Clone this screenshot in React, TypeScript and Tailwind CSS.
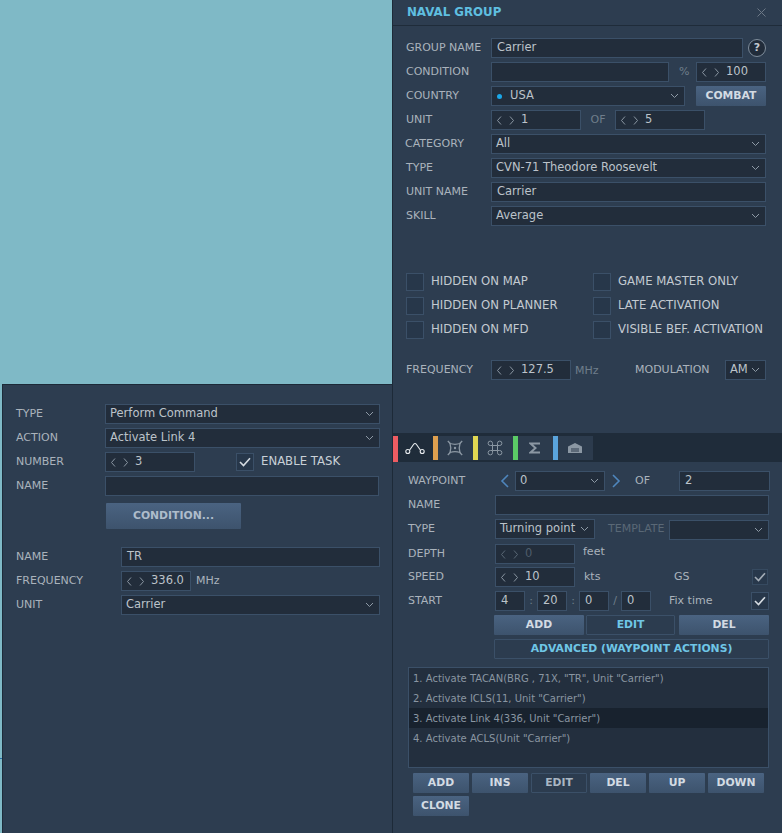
import { ReactNode } from "react";

const field = "h-5 shrink-0 flex items-center bg-[#222d3b] border border-[#3b5068] text-[11.5px] text-[#bcc3ca]";
const label = "shrink-0 text-[11px] text-[#aab3bc]";

function Chevron({ className = "" }: { className?: string }) {
  return (
    <svg width="9" height="6" viewBox="0 0 9 6" fill="none" stroke="#8e9aa6" strokeWidth="1" className={className}>
      <path d="M1 1l3.5 3.5L8 1" />
    </svg>
  );
}

function Input({ w, value = "", className = "" }: { w: string; value?: string; className?: string }) {
  return <div className={`${field} ${w} pl-[5px] ${className}`}>{value}</div>;
}

function Select({ w, value = "", dot = false, className = "" }: { w: string; value?: string; dot?: boolean; className?: string }) {
  return (
    <div className={`${field} ${w} pl-[4px] pr-[5px] justify-between ${className}`}>
      <span className="flex items-center whitespace-nowrap">
        {dot && <span className="ml-[1px] mr-[8px] w-[5px] h-[5px] rounded-full bg-[#1aa7e8]" />}
        {value}
      </span>
      <Chevron />
    </div>
  );
}

function Spinner({ w, value, dim = false }: { w: string; value: string; dim?: boolean }) {
  return (
    <div className={`${field} ${w} pl-[5px]`}>
      <svg width="17" height="9" viewBox="0 0 17 9" fill="none" stroke={dim ? "#5a6876" : "#8a96a2"} strokeWidth="1">
        <path d="M4 0.5L0.5 4.5L4 8.5M13 0.5L16.500 4.500L13 8.500" />
      </svg>
      <span className={`ml-[7px] ${dim ? "text-[#4e5c6a]" : ""}`}>{value}</span>
    </div>
  );
}

function Button({ w, text, flat = false, blue = false, className = "" }: { w: string; text: string; flat?: boolean; blue?: boolean; className?: string }) {
  const skin = flat
    ? "border border-[#3b5068] bg-[#2c3c4f]"
    : "bg-gradient-to-b from-[#4a6381] to-[#3d536d]";
  const color = blue ? "text-[#6fc6e6]" : flat ? "text-[#a9b6c3]" : "text-[#d3dbe3]";
  return (
    <div className={`h-5 shrink-0 flex items-center justify-center rounded-[1px] text-[10.800px] font-bold ${skin} ${color} ${w} ${className}`}>
      {text}
    </div>
  );
}

function Check({ on = false, className = "" }: { on?: boolean; className?: string }) {
  return (
    <div className={`w-[18px] h-[18px] shrink-0 flex items-center justify-center bg-[#27374a] border border-[#3b5068] ${className}`}>
      {on && (
        <svg width="12" height="10" viewBox="0 0 12 10" fill="none" stroke="#d5dbe1" strokeWidth="1.6">
          <path d="M1 5l3.5 3.5L11 1.2" />
        </svg>
      )}
    </div>
  );
}

function Row({ children, className = "" }: { children: ReactNode; className?: string }) {
  return <div className={`h-5 flex items-center ${className}`}>{children}</div>;
}

function CheckLabel({ text, w }: { text: string; w: string }) {
  return (
    <div className={`${w} flex items-center gap-[7px] text-[11.700px] text-[#c3cad1] whitespace-nowrap`}>
      <Check />
      {text}
    </div>
  );
}

function TabIcon({ color, children, active = false }: { color: string; children: ReactNode; active?: boolean }) {
  return (
    <div className={`h-[24px] w-10 flex ${active ? "" : "bg-[#2c3b4d]"}`}>
      <div className={`w-[5px] shrink-0 ${color} ${active ? "h-[26px]" : "h-[24px]"}`} />
      <div className="flex-1 flex items-center justify-center pr-[1px]">{children}</div>
    </div>
  );
}

export default function App() {
  return (
    <div className="w-[782px] h-[833px] flex overflow-hidden relative bg-[#2d3d50] font-['DejaVu_Sans',sans-serif]">
      {/* left column: map and the task panel */}
      <div className="w-[392px] shrink-0 flex flex-col bg-[#7fb9c6] pl-[2px]">
        <div className="h-[384px] shrink-0" />
        <div className="flex-1 bg-[#2d3d50] border-t border-l border-[#1d2a38] pl-[13px] pt-[19px]">
          <div className="flex flex-col gap-1">
            <Row>
              <span className={`${label} w-[89px]`}>TYPE</span>
              <Select w="w-[275px]" value="Perform Command" />
            </Row>
            <Row>
              <span className={`${label} w-[89px]`}>ACTION</span>
              <Select w="w-[275px]" value="Activate Link 4" />
            </Row>
            <Row>
              <span className={`${label} w-[89px]`}>NUMBER</span>
              <Spinner w="w-[90px]" value="3" />
              <Check on className="ml-[41px]" />
              <span className="ml-[7px] text-[11.700px] text-[#c9d0d7]">ENABLE TASK</span>
            </Row>
            <Row>
              <span className={`${label} w-[89px]`}>NAME</span>
              <Input w="w-[274px]" />
            </Row>
          </div>
          <Button w="w-[135px]" text="CONDITION..." className="!h-[26px] ml-[90px] mt-[7px] !text-[#aebccb]" />
          <div className="flex flex-col gap-1 mt-[18px]">
            <Row>
              <span className={`${label} w-[105px]`}>NAME</span>
              <Input w="w-[259px]" value="TR" />
            </Row>
            <Row>
              <span className={`${label} w-[105px]`}>FREQUENCY</span>
              <Spinner w="w-[70px]" value="336.0" />
              <span className={`${label} ml-[5px]`}>MHz</span>
            </Row>
            <Row>
              <span className={`${label} w-[105px]`}>UNIT</span>
              <Select w="w-[259px]" value="Carrier" />
            </Row>
          </div>
        </div>
      </div>

      {/* right column: group panel */}
      <div className="w-[390px] shrink-0 flex flex-col border-l border-[#1d2a38]">
        <div className="h-[26px] shrink-0 flex items-center justify-between pl-[14px] pr-[16px] border-b border-[#1f2c3a]">
          <span className="text-[11.800px] font-bold text-[#5fbfe0]">NAVAL GROUP</span>
          <svg width="9" height="9" viewBox="0 0 9 9" stroke="#6c7886" strokeWidth="1">
            <path d="M0.5 0.5l8 8M8.5 0.5l-8 8" />
          </svg>
        </div>

        <div className="h-[407px] shrink-0 pl-[13px] pt-[12px]">
          <div className="flex flex-col gap-1">
            <Row>
              <span className={`${label} w-[85px]`}>GROUP NAME</span>
              <Input w="w-[252px]" value="Carrier" />
              <div className="ml-[5px] w-[18px] h-[18px] rounded-full border border-[#7f8d9b] bg-[#212c3a] flex items-center justify-center text-[11px] font-bold text-[#c3cad1]">?</div>
            </Row>
            <Row>
              <span className={`${label} w-[85px]`}>CONDITION</span>
              <Input w="w-[178px]" />
              <span className="w-[27px] pl-[10px] text-[11px] text-[#6f7d8b]">%</span>
              <Spinner w="w-[70px]" value="100" />
            </Row>
            <Row>
              <span className={`${label} w-[85px]`}>COUNTRY</span>
              <Select w="w-[194px]" value="USA" dot />
              <Button w="w-[70px]" text="COMBAT" className="ml-[11px]" />
            </Row>
            <Row>
              <span className={`${label} w-[85px]`}>UNIT</span>
              <Spinner w="w-[90px]" value="1" />
              <span className="w-[34px] text-center text-[11px] text-[#6f7d8b]">OF</span>
              <Spinner w="w-[90px]" value="5" />
            </Row>
            <Row>
              <span className={`${label} w-[85px] -ml-[1px] mr-[1px]`}>CATEGORY</span>
              <Select w="w-[275px]" value="All" />
            </Row>
            <Row>
              <span className={`${label} w-[85px]`}>TYPE</span>
              <Select w="w-[275px]" value="CVN-71 Theodore Roosevelt" />
            </Row>
            <Row>
              <span className={`${label} w-[85px]`}>UNIT NAME</span>
              <Input w="w-[275px]" value="Carrier" />
            </Row>
            <Row>
              <span className={`${label} w-[85px]`}>SKILL</span>
              <Select w="w-[275px]" value="Average" />
            </Row>
          </div>

          <div className="mt-[47px] flex flex-col gap-[6px]">
            <div className="flex">
              <CheckLabel w="w-[187px]" text="HIDDEN ON MAP" />
              <CheckLabel w="w-[170px]" text="GAME MASTER ONLY" />
            </div>
            <div className="flex">
              <CheckLabel w="w-[187px]" text="HIDDEN ON PLANNER" />
              <CheckLabel w="w-[170px]" text="LATE ACTIVATION" />
            </div>
            <div className="flex">
              <CheckLabel w="w-[187px]" text="HIDDEN ON MFD" />
              <CheckLabel w="w-[170px]" text="VISIBLE BEF. ACTIVATION" />
            </div>
          </div>

          <Row className="mt-[21px]">
            <span className={`${label} w-[85px]`}>FREQUENCY</span>
            <Spinner w="w-[80px]" value="127.5" />
            <span className="w-[64px] pl-[4px] pt-[3px] text-[11px] text-[#6f7d8b]">MHz</span>
            <span className={`${label} w-[90px]`}>MODULATION</span>
            <Select w="w-[41px]" value="AM" />
          </Row>
        </div>

        {/* tab strip */}
        <div className="h-[29px] shrink-0 bg-[#1f2c3a] pt-[3px] flex items-start">
          <TabIcon color="bg-[#ee5c62]" active>
            <svg width="20" height="14" viewBox="0 0 20 14" fill="none" stroke="#e8ecef" strokeWidth="1.1">
              <circle cx="2.8" cy="10.5" r="2" />
              <circle cx="17.2" cy="10.5" r="2" />
              <path d="M4.5 9.200L8.500 3.500Q10 1.500 11.500 3.500L15.500 9.200" />
            </svg>
          </TabIcon>
          <TabIcon color="bg-[#dea04f]">
            <svg width="16" height="16" viewBox="0 0 16 16" fill="none" stroke="#8b97a3" strokeWidth="1.3">
              <path d="M3 3.5q5 1.6 10 0q-1.6 4.500 0 9q-5-1.600-10 0q1.600-4.500 0-9z" />
              <path d="M0.800 1l2.500 2.500M15.200 1l-2.500 2.500M0.800 15l2.500-2.500M15.200 15l-2.500-2.500" />
              <circle cx="8" cy="8" r="1.200" fill="#8b97a3" stroke="none" />
            </svg>
          </TabIcon>
          <TabIcon color="bg-[#e0d752]">
            <svg width="16" height="16" viewBox="0 0 16 16" fill="none" stroke="#8b97a3" strokeWidth="1">
              <path d="M5.500 5.500h5v5h-5zM5.500 5.500V3.300a2.200 2.200 0 1 0-2.200 2.200h2.200M10.500 5.500V3.300a2.200 2.200 0 1 1 2.200 2.200h-2.200M5.500 10.500v2.200a2.200 2.200 0 1 1-2.200-2.200h2.200M10.500 10.500v2.200a2.200 2.200 0 1 0 2.200-2.200h-2.200" />
            </svg>
          </TabIcon>
          <TabIcon color="bg-[#5bcb66]">
            <svg width="12" height="12" viewBox="0 0 12 12" fill="none" stroke="#8b97a3" strokeWidth="2">
              <path d="M11 1.500H1.500L6.500 6l-5 4.500H11" />
            </svg>
          </TabIcon>
          <TabIcon color="bg-[#5aa4dc]">
            <svg width="16" height="12" viewBox="0 0 16 12" fill="#8b97a3">
              <path d="M1 4.500L8 1l7 3.500V11H1zM4 6.500v1h8v-1zM4 8.500v1h8v-1z" fillRule="evenodd" />
            </svg>
          </TabIcon>
        </div>

        {/* waypoint section */}
        <div className="flex-1 pl-[15px] pt-[9px]">
          <Row>
            <span className={`${label} w-[92px]`}>WAYPOINT</span>
            <svg width="10" height="14" viewBox="0 0 10 14" fill="none" stroke="#4f86bd" strokeWidth="1.600">
              <path d="M8 1L2 7l6 6" />
            </svg>
            <Select w="w-[90px]" value="0" className="ml-[5px]" />
            <svg width="10" height="14" viewBox="0 0 10 14" fill="none" stroke="#4f86bd" strokeWidth="1.600" className="ml-[6px]">
              <path d="M2 1l6 6-6 6" />
            </svg>
            <span className="ml-[14px] w-[44px] text-[11px] text-[#aab3bc]">OF</span>
            <Input w="w-[91px]" value="2" />
          </Row>
          <Row className="mt-1">
            <span className={`${label} w-[87px]`}>NAME</span>
            <Input w="w-[274px]" />
          </Row>
          <Row className="mt-1">
            <span className={`${label} w-[87px]`}>TYPE</span>
            <Select w="w-[100px]" value="Turning point" />
            <span className="w-[74px] pl-[13px] text-[11px] text-[#5a6876]">TEMPLATE</span>
            <Select w="w-[100px]" className="mt-[1px]" />
          </Row>
          <Row className="mt-[5px]">
            <span className={`${label} w-[87px]`}>DEPTH</span>
            <Spinner w="w-[80px]" value="0" dim />
            <span className={`${label} ml-2 -mt-[4px]`}>feet</span>
          </Row>
          <Row className="mt-[3px]">
            <span className={`${label} w-[87px]`}>SPEED</span>
            <Spinner w="w-[80px]" value="10" />
            <span className={`${label} w-[90px] ml-[9px]`}>kts</span>
            <span className={`${label} w-[78px]`}>GS</span>
            <Check on className="!w-4 !h-4 opacity-70" />
          </Row>
          <Row className="mt-[4px]">
            <span className={`${label} w-[87px]`}>START</span>
            <Input w="w-[30px]" value="4" />
            <span className="w-3 text-center text-[11px] text-[#6f7d8b]">:</span>
            <Input w="w-[30px]" value="20" />
            <span className="w-3 text-center text-[11px] text-[#6f7d8b]">:</span>
            <Input w="w-[30px]" value="0" />
            <span className="w-3 text-center text-[11px] text-[#6f7d8b]">/</span>
            <Input w="w-[30px]" value="0" />
            <span className={`${label} w-[82px] ml-[18px]`}>Fix time</span>
            <Check on />
          </Row>
          <Row className="mt-1 ml-[86px] gap-[2px]">
            <Button w="w-[90px]" text="ADD" />
            <Button w="w-[89px]" text="EDIT" flat blue />
            <Button w="w-[90px]" text="DEL" className="ml-[2px]" />
          </Row>
          <Row className="mt-1 ml-[86px]">
            <Button w="w-[275px]" text="ADVANCED (WAYPOINT ACTIONS)" flat blue />
          </Row>

          <div className="mt-2 w-[361px] h-[101px] bg-[#232f3e] border border-[#3b5068] text-[10px] text-[#8a96a2]">
            <div className="h-5 pl-[4px] flex items-center">1. Activate TACAN(BRG , 71X, "TR", Unit "Carrier")</div>
            <div className="h-5 pl-[4px] flex items-center">2. Activate ICLS(11, Unit "Carrier")</div>
            <div className="h-5 pl-[4px] flex items-center bg-[#18222e]">3. Activate Link 4(336, Unit "Carrier")</div>
            <div className="h-5 pl-[4px] flex items-center">4. Activate ACLS(Unit "Carrier")</div>
          </div>

          <div className="mt-[5px] ml-[5px] flex flex-wrap gap-x-[3px] gap-y-[3px] w-[360px]">
            <Button w="w-[56px]" text="ADD" />
            <Button w="w-[56px]" text="INS" />
            <Button w="w-[56px]" text="EDIT" flat />
            <Button w="w-[56px]" text="DEL" />
            <Button w="w-[56px]" text="UP" />
            <Button w="w-[56px]" text="DOWN" />
            <Button w="w-[56px]" text="CLONE" />
          </div>
        </div>
      </div>

      {/* small map marker peeking at the window edge */}
      <div className="absolute left-0 top-[758px] w-[2px] h-px bg-[#2a6ea8]" />
    </div>
  );
}
